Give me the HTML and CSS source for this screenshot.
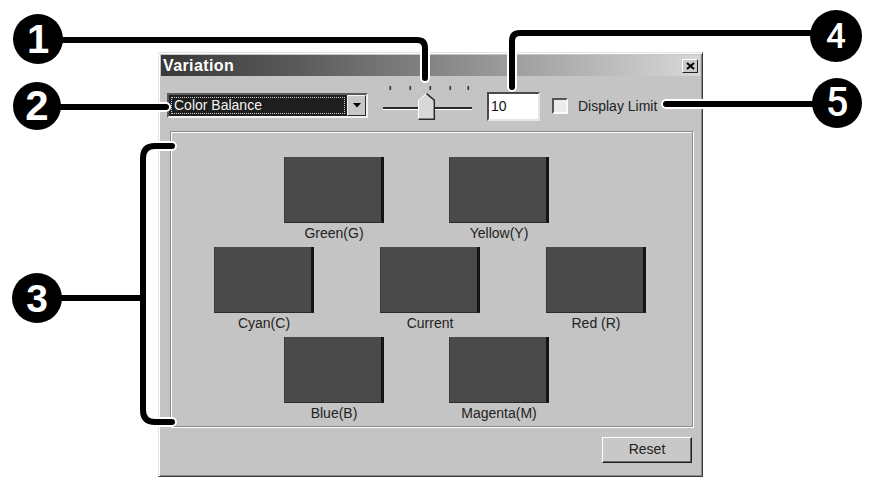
FILE: index.html
```html
<!DOCTYPE html>
<html>
<head>
<meta charset="utf-8">
<title>Variation</title>
<link rel="stylesheet" href="styles.css">
</head>
<body>
<div class="figure">
  <div class="dialog">
    <div class="titlebar">
      <span class="title">Variation</span>
      <span class="close"><svg width="9" height="8" viewBox="0 0 9 8"><path d="M1 1 L8 7 M8 1 L1 7" stroke="#000" stroke-width="2"/></svg></span>
    </div>
    <div class="toolbar">
      <div class="combo">
        <div class="combo-field"><span class="combo-text">Color Balance</span></div>
        <div class="combo-btn"><svg width="8" height="5" viewBox="0 0 8 5"><polygon points="0,0 8,0 4,4.5" fill="#000"/></svg></div>
      </div>
      <div class="slider">
        <svg width="100" height="38" viewBox="0 0 100 38">
          <rect x="11.5" y="2" width="1.6" height="4" fill="#333"/>
          <rect x="31.5" y="2" width="1.6" height="4" fill="#333"/>
          <rect x="51.5" y="2" width="1.6" height="4" fill="#333"/>
          <rect x="71.5" y="2" width="1.6" height="4" fill="#333"/>
          <rect x="89.5" y="2" width="1.6" height="4" fill="#333"/>
          <rect x="5" y="23" width="89" height="2" fill="#2a2a2a"/>
          <rect x="5" y="25" width="89" height="1" fill="#fff"/>
          <polygon points="40,36 40,16 48.5,9 57,16 57,36" fill="#d8d8d8"/>
          <polyline points="40.5,36 40.5,16.3 48.5,9.6" fill="none" stroke="#fff" stroke-width="1"/>
          <polyline points="48.5,9.6 56.3,16.2 56.3,35.3 40.5,35.3" fill="none" stroke="#2a2a2a" stroke-width="1.5"/>
        </svg>
      </div>
      <div class="edit">10</div>
      <div class="check"><span class="check-box"></span><span class="check-label">Display Limit</span></div>
    </div>
    <div class="group">
      <div class="row row-a">
        <div class="item"><div class="swatch"></div><div class="label">Green(G)</div></div>
        <div class="item"><div class="swatch"></div><div class="label">Yellow(Y)</div></div>
      </div>
      <div class="row row-b">
        <div class="item"><div class="swatch"></div><div class="label">Cyan(C)</div></div>
        <div class="item"><div class="swatch"></div><div class="label">Current</div></div>
        <div class="item"><div class="swatch"></div><div class="label">Red (R)</div></div>
      </div>
      <div class="row row-a">
        <div class="item"><div class="swatch"></div><div class="label">Blue(B)</div></div>
        <div class="item"><div class="swatch"></div><div class="label">Magenta(M)</div></div>
      </div>
    </div>
    <div class="footer"><div class="btn">Reset</div></div>
  </div>

  <svg class="callouts" width="870" height="484" viewBox="0 0 870 484">
    <g fill="none" stroke="#fff" stroke-width="10" stroke-linecap="round" stroke-linejoin="round">
      <path d="M60 40 H417 Q425 40 425 48 V78"/>
      <path d="M58 107 H166"/>
      <path d="M58 298 H143"/>
      <path d="M172 146 H155 Q143 146 143 158 V410 Q143 422 155 422 H172"/>
      <path d="M815 33 H520 Q512 33 512 41 V87"/>
      <path d="M666 104 H815"/>
    </g>
    <g fill="none" stroke="#000" stroke-width="6" stroke-linecap="round" stroke-linejoin="round">
      <path d="M60 40 H417 Q425 40 425 48 V78"/>
      <path d="M58 107 H166"/>
      <path d="M58 298 H143"/>
      <path d="M172 146 H155 Q143 146 143 158 V410 Q143 422 155 422 H172"/>
      <path d="M815 33 H520 Q512 33 512 41 V87"/>
      <path d="M666 104 H815"/>
    </g>
  </svg>
  <div class="badge b1">1</div>
  <div class="badge b2">2</div>
  <div class="badge b3">3</div>
  <div class="badge b4">4</div>
  <div class="badge b5">5</div>
</div>
</body>
</html>
```
FILE: styles.css
```css
* { box-sizing: border-box; }
body {
  margin: 0;
  background: #fff;
  font-family: "Liberation Sans", Arial, sans-serif;
}
.figure {
  position: relative;
  width: 870px;
  height: 484px;
  padding: 52px 0 0 158px;
  overflow: hidden;
}
.dialog {
  width: 545px;
  height: 425px;
  background: #c4c4c4;
  border: 1px solid;
  border-color: #e2e2e2 #3a3a3a #3a3a3a #e2e2e2;
  box-shadow: inset 1px 1px 0 #fff, inset -1px -1px 0 #8a8a8a;
  padding: 2px;
  display: flex;
  flex-direction: column;
}
.titlebar {
  height: 21px;
  flex: none;
  display: flex;
  align-items: center;
  justify-content: space-between;
  padding: 0 2px;
  background: linear-gradient(to right, #383838 0%, #5a5a5a 25%, #8c8c8c 55%, #d8d8d8 100%);
}
.title {
  color: #fff;
  font-weight: bold;
  font-size: 16px;
  line-height: 21px;
  letter-spacing: 0.4px;
}
.close {
  width: 16px;
  height: 14px;
  background: #cacaca;
  border: 1px solid;
  border-color: #fff #222 #222 #fff;
  display: flex;
  align-items: center;
  justify-content: center;
}
.toolbar {
  margin-top: 8px;
  height: 38px;
  flex: none;
  display: flex;
  align-items: flex-start;
  padding-left: 6px;
}
.combo {
  margin-top: 9px;
  width: 201px;
  height: 25px;
  display: flex;
  border: 2px solid;
  border-color: #5a5a5a #f0f0f0 #f0f0f0 #5a5a5a;
  background: #1e1e1e;
}
.combo-field {
  flex: 1;
  padding: 2px;
  background: #1e1e1e;
  display: flex;
}
.combo-text {
  flex: 1;
  border: 1px dotted #cfcfcf;
  color: #f4f4f4;
  font-size: 14px;
  line-height: 15px;
  padding-left: 2px;
}
.combo-btn {
  width: 19px;
  background: #c8c8c8;
  border: 1px solid;
  border-color: #f2f2f2 #2a2a2a #2a2a2a #f2f2f2;
  display: flex;
  align-items: center;
  justify-content: center;
}
.slider {
  margin-left: 10px;
  width: 100px;
  height: 38px;
}
.slider svg { display: block; }
.edit {
  margin-left: 9px;
  margin-top: 8px;
  width: 53px;
  height: 29px;
  background: #fff;
  border: 2px solid;
  border-color: #4a4a4a #e6e6e6 #e6e6e6 #4a4a4a;
  font-size: 14px;
  line-height: 24px;
  padding-left: 2px;
  color: #111;
}
.check {
  margin-left: 12px;
  margin-top: 14px;
  height: 16px;
  display: flex;
  align-items: center;
  gap: 10px;
}
.check-box {
  width: 16px;
  height: 16px;
  background: #ececec;
  border: 2px solid;
  border-color: #555 #fafafa #fafafa #555;
}
.check-label {
  font-size: 14px;
  color: #222;
  line-height: 16px;
}
.group {
  margin: 9px 0 0 9px;
  width: 523px;
  height: 296px;
  flex: none;
  border: 1px solid #8a8a8a;
  box-shadow: 1px 1px 0 #fff, inset 1px 1px 0 #fff;
  padding-top: 25px;
}
.row {
  display: flex;
  height: 90px;
}
.row-a { padding-left: 113px; gap: 65px; }
.row-b { padding-left: 43px; gap: 66px; }
.item { width: 100px; }
.swatch {
  height: 66px;
  background: #4a4a4a;
  border-right: 3px solid #141414;
  border-bottom: 1px solid #2a2a2a;
  border-left: 1px solid #3a3a3a;
}
.label {
  height: 24px;
  line-height: 20px;
  text-align: center;
  font-size: 14px;
  color: #222;
  white-space: nowrap;
}
.footer {
  margin-top: 10px;
  display: flex;
  justify-content: flex-end;
  padding-right: 8px;
}
.btn {
  width: 90px;
  height: 26px;
  background: #c8c8c8;
  border: 1px solid;
  border-color: #fff #1e1e1e #1e1e1e #fff;
  box-shadow: inset -1px -1px 0 #6a6a6a;
  font-size: 14px;
  line-height: 23px;
  text-align: center;
  color: #222;
}
.callouts {
  position: absolute;
  left: 0;
  top: 0;
  pointer-events: none;
}
.badge {
  position: absolute;
  background: #000;
  color: #fff;
  border-radius: 50%;
  display: flex;
  align-items: center;
  justify-content: center;
  font-family: "Liberation Sans", Arial, sans-serif;
  font-weight: bold;
  line-height: 1;
}
.b1 { left: 13px; top: 14px; width: 50px; height: 50px; font-size: 40px; }
.b2 { left: 13px; top: 82px; width: 48px; height: 48px; font-size: 42px; }
.b3 { left: 12px; top: 273px; width: 50px; height: 50px; font-size: 39px; }
.b4 { left: 810px; top: 10px; width: 52px; height: 52px; font-size: 35px; font-family: Roboto, "Liberation Sans", sans-serif; font-weight: 500; }
.b5 { left: 812px; top: 78px; width: 50px; height: 50px; font-size: 40px; font-family: Roboto, "Liberation Sans", sans-serif; font-weight: 500; }
```
